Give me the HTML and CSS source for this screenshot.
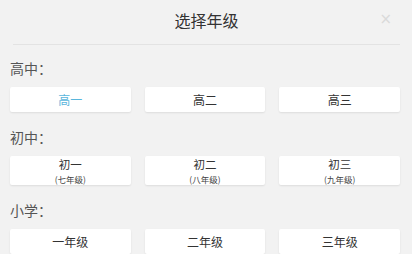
FILE: index.html
```html
<!DOCTYPE html>
<html lang="zh">
<head>
<meta charset="utf-8">
<link rel="stylesheet" href="styles.css">
</head>
<body>
<div class="sheet">
  <header class="head">
    <h1 class="title">选择年级</h1>
    <span class="close">×</span>
  </header>
  <section class="group">
    <div class="label">高中：</div>
    <div class="grid">
      <button class="btn active">高一</button>
      <button class="btn">高二</button>
      <button class="btn">高三</button>
    </div>
  </section>
  <section class="group">
    <div class="label">初中：</div>
    <div class="grid tall">
      <button class="btn"><span class="main">初一</span><span class="sub">(七年级)</span></button>
      <button class="btn"><span class="main">初二</span><span class="sub">(八年级)</span></button>
      <button class="btn"><span class="main">初三</span><span class="sub">(九年级)</span></button>
    </div>
  </section>
  <section class="group">
    <div class="label">小学：</div>
    <div class="grid">
      <button class="btn">一年级</button>
      <button class="btn">二年级</button>
      <button class="btn">三年级</button>
    </div>
  </section>
</div>
</body>
</html>
```
FILE: styles.css
```css
html, body {
  margin: 0;
  padding: 0;
  background: #f2f2f2;
  overflow: hidden;
}
body {
  font-family: "Noto Sans CJK SC", "Noto Sans", sans-serif;
  color: #333;
}
.sheet {
  width: 412px;
  height: 254px;
  overflow: hidden;
}
.head {
  position: relative;
  height: 44px;
  margin: 0 12px 0 13px;
  border-bottom: 1px solid #e3e3e3;
  display: flex;
  align-items: center;
  justify-content: center;
}
.title {
  margin: 0;
  margin-top: -4px;
  font-size: 16px;
  font-weight: normal;
  color: #333;
}
.close {
  position: absolute;
  right: 8px;
  top: 10px;
  font-size: 15px;
  color: #dadada;
  font-family: "DejaVu Sans", sans-serif;
}
.group {
  padding: 0 12px 0 10px;
}
.group:first-of-type .label {
  margin-top: 13px;
}
.label {
  margin-top: 15px;
  height: 20px;
  line-height: 20px;
  font-size: 14px;
  color: #555;
}
.grid {
  margin-top: 9px;
  display: grid;
  grid-template-columns: repeat(3, 1fr);
  column-gap: 14px;
}
.btn {
  height: 25px;
  border: none;
  border-radius: 2px;
  background: #fff;
  box-shadow: 0 1px 2px rgba(0, 0, 0, 0.09);
  font-family: inherit;
  font-size: 12px;
  color: #333;
  padding: 0;
  display: flex;
  flex-direction: column;
  align-items: center;
  justify-content: center;
  line-height: 14px;
}
.tall .btn {
  height: 29px;
}
.main {
  display: block;
  font-size: 11.5px;
  line-height: 17px;
}
.sub {
  display: block;
  font-size: 8.5px;
  line-height: 12px;
  color: #444;
}
.btn.active {
  color: #5ab6dc;
}
```
